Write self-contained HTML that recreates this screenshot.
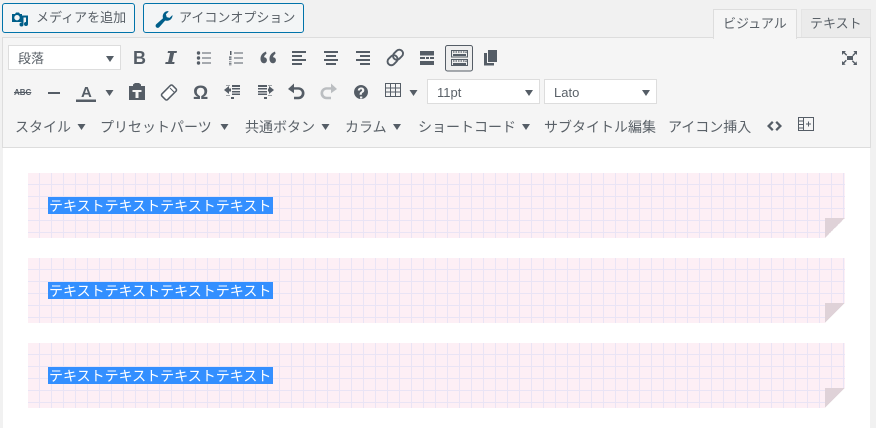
<!DOCTYPE html>
<html lang="ja"><head><meta charset="utf-8"><style>
html,body{margin:0;padding:0}
body{width:876px;height:428px;overflow:hidden;position:relative;background:#f1f1f1;font-family:"Liberation Sans","Noto Sans CJK JP",sans-serif;color:#5a6168}
div,span{position:absolute;box-sizing:border-box}
.t{font-size:14px;line-height:20px;white-space:nowrap}
.s{font-size:13px}
.btn{border:1px solid #0073aa;border-radius:3px;background:#f3f5f6;top:3px;height:30px}
.sel{background:#fff;border:1px solid #ddd}
.note{left:28px;width:817px;height:65px;background-color:#fdeff5;background-image:linear-gradient(to right,#e9e4f5 1px,transparent 1px),linear-gradient(to bottom,#e9e4f5 1px,transparent 1px);background-size:12px 12px;background-position:11px 11px}
.hl{left:20px;top:24px;width:225px;height:17px;background:#338fff;color:#fff;font-size:14px;line-height:18px;white-space:nowrap;padding-left:1px}
.fold{right:0;bottom:0;width:20px;height:20px;background:linear-gradient(135deg,#dfd2d8 0,#dfd2d8 50%,#fff 50%)}
svg{position:absolute;left:0;top:0}
</style></head><body>
<div class="btn" style="left:2px;width:133px"></div>
<div class="btn" style="left:143px;width:161px"></div>
<span class="t s" style="left:36px;top:8px;">メディアを追加</span>
<span class="t s" style="left:179px;top:8px;">アイコンオプション</span>
<div style="left:713px;top:9px;width:84px;height:30px;background:#f5f5f5;border:1px solid #ddd;border-bottom:0;z-index:2"></div>
<div style="left:801px;top:9px;width:70px;height:29px;background:#ebebeb;border:1px solid #e4e4e4;border-bottom:0"></div>
<span class="t s" style="left:723px;top:14px;z-index:3">ビジュアル</span>
<span class="t s" style="left:810px;top:14px;">テキスト</span>
<div style="left:2px;top:37px;width:869px;height:111px;background:#f5f5f5;border:1px solid #ddd"></div>
<div style="left:3px;top:148px;width:867px;height:280px;background:#fff"></div>
<div class="sel" style="left:8px;top:45px;width:113px;height:25px"></div>
<div class="sel" style="left:427px;top:79px;width:113px;height:25px"></div>
<div class="sel" style="left:544px;top:79px;width:113px;height:25px"></div>
<span class="t s" style="left:18px;top:49px">段落</span>
<span class="t s" style="left:437px;top:83px">11pt</span>
<span class="t s" style="left:554px;top:83px">Lato</span>
<span class="t" style="left:15px;top:117px">スタイル</span>
<span class="t" style="left:100px;top:117px">プリセットパーツ</span>
<span class="t" style="left:245px;top:117px">共通ボタン</span>
<span class="t" style="left:345px;top:117px">カラム</span>
<span class="t" style="left:418px;top:117px">ショートコード</span>
<span class="t" style="left:544px;top:117px">サブタイトル編集</span>
<span class="t" style="left:668px;top:117px">アイコン挿入</span>
<span style="left:133px;top:47px;font:bold 18px/22px 'Liberation Sans',sans-serif;color:#555d66">B</span>
<span style="left:193px;top:82px;font:bold 19px/24px 'Liberation Sans',sans-serif;color:#555d66">Ω</span>
<span style="left:14px;top:88px;font:bold 8px/10px 'Liberation Sans',sans-serif;text-decoration:line-through;color:#555d66">ABC</span>
<span style="left:81px;top:84px;font:bold 15px/18px 'Liberation Sans',sans-serif;color:#555d66">A</span>
<svg width="876" height="428" viewBox="0 0 876 428" fill="#555d66">
<!-- media icon -->
<path d="M12 14h3l1-1.500h3l1 1.500h2v8h-10zM17 15a2.700 2.700 0 1 0 .01 0z" fill-rule="evenodd" fill="#005f8a"/>
<path d="M21.500 15.500h6.500v8.500a2 2 0 1 1-2-2v-4.500h-2.500v7a2 2 0 1 1-2-2z" fill="#005f8a"/>
<!-- wrench -->
<path d="M168 11a5.500 5.500 0 0 0-5 7.300l-6.800 6a2.100 2.100 0 0 0 3 3l6-6.800a5.500 5.500 0 0 0 7.300-5.500l-3 2.900-2.800-.8-.8-2.800 3-2.900a5.500 5.500 0 0 0-1.200-.2z" fill="#005f8a"/>
<!-- italic -->
<path d="M168 51h9l-.4 2h-2.500l-2 9h2.500l-.4 2h-9l.4-2h2.500l2-9h-2.500z"/>
<!-- lists -->
<circle cx="198.500" cy="53" r="1.700"/><circle cx="198.500" cy="58" r="1.700"/><circle cx="198.500" cy="63" r="1.700"/>
<path d="M202 52.500h9v1h-9zM202 57.500h9v1h-9zM202 62.500h9v1h-9zM234 52.500h9v1h-9zM234 57.500h9v1h-9zM234 62.500h9v1h-9z"/>
<path d="M230 51h1.500v4H230zM229 56.500h2.500v1.200H229zM229 58.500h2.500v1.200H229zM229 61.500h2.500v.8H229zM229 63h2.500v.8H229zM229 64.500h2.500v.8H229z"/>
<!-- quote -->
<path d="M266 51.500c-3.500 1.500-5.500 3.800-5.500 7.400 0 2.400 1.300 4.300 3.400 4.300 1.700 0 3-1.300 3-3s-1.200-2.900-2.900-2.900c.2-1.400 1.100-2.600 2.500-3.500zM275 51.500c-3.500 1.500-5.500 3.800-5.500 7.400 0 2.400 1.300 4.300 3.400 4.300 1.700 0 3-1.300 3-3s-1.200-2.900-2.900-2.900c.2-1.400 1.100-2.600 2.500-3.500z"/>
<!-- align -->
<path d="M292 51h14v2h-14zM292 55h10v2h-10zM292 59h14v2h-14zM292 63h10v2h-10z"/>
<path d="M324 51h14v2h-14zM326 55h10v2h-10zM324 59h14v2h-14zM326 63h10v2h-10z"/>
<path d="M356 51h14v2h-14zM360 55h10v2h-10zM356 59h14v2h-14zM360 63h10v2h-10z"/>
<!-- link -->
<g fill="none" stroke="#555d66" stroke-width="1.900"><rect x="387" y="56.500" width="11" height="7.500" rx="3.700" transform="rotate(-45 392.500 60.200)"/><rect x="392.500" y="51" width="11" height="7.500" rx="3.700" transform="rotate(-45 398 54.700)"/></g>
<!-- hr -->
<path d="M420 51h14v4.500h-14zM420 57h5v2h-5zM426 57h3v2h-3zM430 57h4v2h-4zM420 61h14v4h-14z"/>
<!-- active -->
<rect x="445.500" y="45.500" width="27" height="25.500" rx="2" fill="#eeeeee" stroke="#555d66"/>
<g fill="none" stroke="#555d66"><rect x="451.500" y="50.500" width="16" height="6.500"/><rect x="451.500" y="59.500" width="16" height="6"/></g>
<path d="M453 52h13v1.500M453 61h13v1.500" fill="none" stroke="#555d66" stroke-width="1.300" stroke-dasharray="1.500 1"/>
<path d="M453 54h13v2h-13zM453 63h13v2h-13z"/>
<!-- copy -->
<path d="M488 50h9v12h-9z"/><path d="M484 53h3v10h7v2.500h-10z"/>
<!-- fullscreen -->
<path d="M847 56h6v4h-6zM842 51h4l-1.300 1.300 2.500 2.500-1 1-2.500-2.500L842 55zM857 51v4l-1.300-1.300-2.500 2.500-1-1 2.500-2.500L853.400 51zM842 65v-4l1.300 1.300 2.500-2.500 1 1-2.500 2.500 1.300 1.300zM857 65h-4l1.300-1.300-2.500-2.500 1-1 2.500 2.500 1.300-1.300z"/>
<!-- select arrows -->
<path d="M106 56h8l-4 6zM525 90h8l-4 6zM642 90h8l-4 6zM105.500 90h8l-4 6zM409.500 90h8l-4 6z"/>
<path d="M76 99.500h20v2.500H76z"/>
<!-- dash -->
<path d="M48 92h12v2H48z"/>
<!-- paste -->
<path d="M129 86h4v-1.500l2-1.500h4l2 1.500V86h4v14h-16zM132.500 90v2h3v6h3v-6h3v-2z" fill-rule="evenodd"/>
<!-- eraser -->
<rect x="161.500" y="88.500" width="15" height="8" rx="1.500" transform="rotate(-45 169 92.500)" fill="#fff" stroke="#555d66" stroke-width="1.500"/>
<path d="M170 88l4 4" stroke="#555d66" fill="none"/>
<!-- outdent -->
<path d="M232 85h8v2h-8zM232 88h8v1.500h-8zM232 91h8v1.500h-8zM232 93.500h8v1.500h-8zM231 97h3v2h-3zM224 90l5-4v2.500h2v3h-2v2.500z"/>
<path d="M226 85h4v1h-4zM226 95h4v1h-4z" fill="#a0a4a8"/>
<!-- indent -->
<path d="M258 85h9v2h-9zM258 88h9v1.500h-9zM258 91h9v1.500h-9zM258 93.500h9v1.500h-9zM264 97h3v2h-3zM274 90l-5-4v2.500h-1v3h1v2.500z"/>
<path d="M268 85h4v1h-4zM268 95h4v1h-4z" fill="#a0a4a8"/>
<!-- undo -->
<path d="M288 89l6-5.500v3.700h4.500a6 6 0 0 1 0 12H294v-2.400h4.200a3.600 3.600 0 0 0 0-7.200H294v3.700z"/>
<path d="M337 89l-6-5.500v3.700h-4.500a6 6 0 0 0 0 12h4.500v-2.400h-4.200a3.600 3.600 0 0 1 0-7.200h4.200v3.700z" fill="#bbbec1"/>
<!-- help -->
<path d="M361 85a7 7 0 1 0 .01 0zM360 96.500h2.300v2H360zM357.800 90.500c0-1.900 1.400-3 3.300-3s3.200 1 3.200 2.700c0 1.300-.8 2-1.700 2.600-.7.500-.8.800-.8 1.900h-2.200c0-1.700.3-2.300 1.300-3 .8-.6 1.200-.9 1.200-1.500s-.4-1-1.100-1-1.100.5-1.100 1.300z" fill-rule="evenodd"/>
<!-- table -->
<path d="M385.500 83.500h15v13h-15zM385.500 88h15M385.500 92h15M390.500 83.500v13M395.500 83.500v13" fill="none" stroke="#555d66"/>
<!-- menu arrows -->
<path d="M77.500 124h8l-4 6zM220.500 124h8l-4 6zM321.500 124h8l-4 6zM393 124h8l-4 6zM522 124h8l-4 6z"/>
<!-- code -->
<path d="M767 126l5-5 1.600 1.600-3.400 3.400 3.400 3.400-1.600 1.600zM782 126l-5-5-1.600 1.600 3.400 3.400-3.400 3.400 1.600 1.600z"/>
<!-- table plus -->
<path d="M798.500 117.500h15v13h-15zM798.500 121h5M798.500 124.500h5M798.500 128h5M803.500 117.500v13M806 124h5M808.500 121.500v5" fill="none" stroke="#555d66"/>
</svg>
<div class="note" style="top:173px"><div class="hl">テキストテキストテキストテキスト</div><div class="fold"></div></div>
<div class="note" style="top:258px"><div class="hl">テキストテキストテキストテキスト</div><div class="fold"></div></div>
<div class="note" style="top:343px"><div class="hl">テキストテキストテキストテキスト</div><div class="fold"></div></div>
</body></html>
